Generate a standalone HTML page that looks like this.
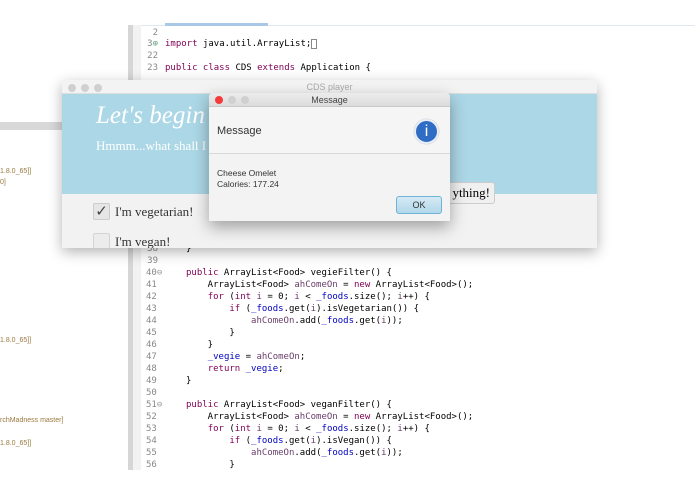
<!DOCTYPE html>
<html><head><meta charset="utf-8"><style>
*{margin:0;padding:0;box-sizing:border-box}
body{width:695px;height:494px;background:#fff;position:relative;overflow:hidden;font-family:"Liberation Sans",sans-serif}
.a{position:absolute}
.code{font-family:"DejaVu Sans Mono",monospace;font-size:9px;line-height:12px;white-space:pre;color:#000}
.ln{font-family:"DejaVu Sans Mono",monospace;font-size:9px;line-height:12px;color:#888;text-align:right;width:20px;left:138px}
.k{color:#7f0055}.f{color:#0000c0}.v{color:#6a3e6a}
.lt{font-size:7px;color:#9a7a40}
</style></head><body>
<!-- left panel -->
<div class="a" style="left:0;top:122px;width:62px;height:8px;background:#d8d8d8"></div>
<div class="a lt" style="left:0;top:168px">1.8.0_65]]</div>
<div class="a lt" style="left:0;top:179px">0]</div>
<div class="a lt" style="left:0;top:337px">1.8.0_65]]</div>
<div class="a lt" style="left:0;top:417px">rchMadness master]</div>
<div class="a lt" style="left:0;top:440px">1.8.0_65]]</div>
<!-- editor -->
<div class="a" style="left:128px;top:25px;width:5px;height:445px;background:#d6d6d6"></div>
<div class="a" style="left:133px;top:25px;width:8px;height:445px;background:#f2f2f2"></div>
<div class="a" style="left:141px;top:25px;width:554px;height:1px;background:#dfe8f0"></div>
<div class="a" style="left:165px;top:23px;width:103px;height:3px;background:#a8c8e8"></div>
<div class="a ln" style="top:27px">2</div>
<div class="a ln" style="top:38px">3<span style="color:#6a8">⊕</span></div>
<div class="a ln" style="top:50px">22</div>
<div class="a ln" style="top:62px">23</div>
<div class="a code" style="left:165px;top:38px"><span class="k">import</span> java.util.ArrayList;<span style="border:1px solid #888;display:inline-block;width:6px;height:10px;vertical-align:middle"></span></div>
<div class="a code" style="left:165px;top:62px"><span class="k">public class</span> CDS <span class="k">extends</span> Application {</div>
<div class="a ln" style="top:243px">38</div>
<div class="a code" style="left:186px;top:243px">}</div>
<div class="a ln" style="top:255px;width:20px">39</div>
<div class="a" style="left:138px;top:267px;line-height:12px">
<div class="ln" style="position:static;text-align:left;padding-left:8px;width:30px;white-space:pre">40<span style="color:#999">⊖</span>
41
42
43
44
45
46
47
48
49
50
51<span style="color:#999">⊖</span>
52
53
54
55
56</div></div>
<div class="a code" style="left:186px;top:267px"><span class="k">public</span> ArrayList&lt;Food&gt; vegieFilter() {
    ArrayList&lt;Food&gt; <span class="v">ahComeOn</span> = <span class="k">new</span> ArrayList&lt;Food&gt;();
    <span class="k">for</span> (<span class="k">int</span> <span class="v">i</span> = 0; <span class="v">i</span> &lt; <span class="f">_foods</span>.size(); <span class="v">i</span>++) {
        <span class="k">if</span> (<span class="f">_foods</span>.get(<span class="v">i</span>).isVegetarian()) {
            <span class="v">ahComeOn</span>.add(<span class="f">_foods</span>.get(<span class="v">i</span>));
        }
    }
    <span class="f">_vegie</span> = <span class="v">ahComeOn</span>;
    <span class="k">return</span> <span class="f">_vegie</span>;
}

<span class="k">public</span> ArrayList&lt;Food&gt; veganFilter() {
    ArrayList&lt;Food&gt; <span class="v">ahComeOn</span> = <span class="k">new</span> ArrayList&lt;Food&gt;();
    <span class="k">for</span> (<span class="k">int</span> <span class="v">i</span> = 0; <span class="v">i</span> &lt; <span class="f">_foods</span>.size(); <span class="v">i</span>++) {
        <span class="k">if</span> (<span class="f">_foods</span>.get(<span class="v">i</span>).isVegan()) {
            <span class="v">ahComeOn</span>.add(<span class="f">_foods</span>.get(<span class="v">i</span>));
        }</div>
<!-- CDS player window -->
<div class="a" style="left:62px;top:80px;width:535px;height:168px;background:#f2f2f2;box-shadow:0 4px 14px rgba(0,0,0,.3);border-radius:4px 4px 0 0;overflow:hidden">
 <div class="a" style="left:0;top:0;width:535px;height:14px;background:#f3f3f3;border-bottom:1px solid #ddd;text-align:center;font-size:9px;color:#aaa;line-height:14px">CDS player</div>
 <div class="a" style="left:6px;top:4px;width:8px;height:8px;border-radius:50%;background:#d0d0d0"></div>
 <div class="a" style="left:19px;top:4px;width:8px;height:8px;border-radius:50%;background:#d0d0d0"></div>
 <div class="a" style="left:32px;top:4px;width:8px;height:8px;border-radius:50%;background:#d0d0d0"></div>
 <div class="a" style="left:0;top:14px;width:535px;height:100px;background:#acd7e6"></div>
 <div class="a" style="left:34px;top:22px;font-family:'Liberation Serif',serif;font-style:italic;font-size:25px;color:#fff">Let's begin a</div>
 <div class="a" style="left:34px;top:58px;font-family:'Liberation Serif',serif;font-size:13px;color:#fff">Hmmm...what shall I</div>
 <div class="a" style="left:370px;top:102px;width:63px;height:22px;background:#f0f0f0;border:1px solid #ccc;border-radius:3px;font-family:'Liberation Serif',serif;font-size:13px;line-height:20px;text-align:right;padding-right:4px">ything!</div>
 <div class="a" style="left:31px;top:123px;width:17px;height:17px;background:#e6e6e6;border:1px solid #ccc;border-radius:2px;font-size:15px;line-height:15px;text-align:center;color:#444">✓</div>
 <div class="a" style="left:53px;top:124px;font-family:'Liberation Serif',serif;font-size:13px;color:#333">I'm vegetarian!</div>
 <div class="a" style="left:31px;top:153px;width:17px;height:17px;background:#ececec;border:1px solid #d4d4d4;border-radius:2px"></div>
 <div class="a" style="left:53px;top:154px;font-family:'Liberation Serif',serif;font-size:13px;color:#333">I'm vegan!</div>
</div>
<!-- message dialog -->
<div class="a" style="left:209px;top:93px;width:241px;height:128px;background:#f3f3f3;box-shadow:0 6px 16px rgba(0,0,0,.35);border-radius:4px 4px 0 0;overflow:hidden">
 <div class="a" style="left:0;top:0;width:241px;height:14px;background:linear-gradient(#ececec,#dcdcdc);border-bottom:1px solid #c8c8c8;text-align:center;font-size:9px;line-height:14px;color:#444">Message</div>
 <div class="a" style="left:6px;top:3px;width:8px;height:8px;border-radius:50%;background:#f23b3b"></div>
 <div class="a" style="left:19px;top:3px;width:8px;height:8px;border-radius:50%;background:#d0d0d0"></div>
 <div class="a" style="left:32px;top:3px;width:8px;height:8px;border-radius:50%;background:#d0d0d0"></div>
 <div class="a" style="left:0;top:14px;width:241px;height:47px;background:#f5f5f5;border-bottom:1px solid #d8d8d8"></div>
 <div class="a" style="left:8px;top:32px;font-size:11px;color:#333">Message</div>
 <div class="a" style="left:205px;top:26px;width:25px;height:25px;border-radius:50%;background:#2f6cc4;border:2px solid #e8eef8;box-shadow:0 0 1px #999;color:#fff;text-align:center;font-size:16px;line-height:21px">i</div>
 <div class="a" style="left:8px;top:75px;font-size:8.5px;line-height:11px;color:#333">Cheese Omelet<br>Calories: 177.24</div>
 <div class="a" style="left:187px;top:103px;width:46px;height:18px;border:1px solid #6fb4d6;border-radius:3px;background:linear-gradient(#d5eaf5,#b2d7ea);font-size:9px;text-align:center;line-height:16px;color:#333">OK</div>
</div>
</body></html>
